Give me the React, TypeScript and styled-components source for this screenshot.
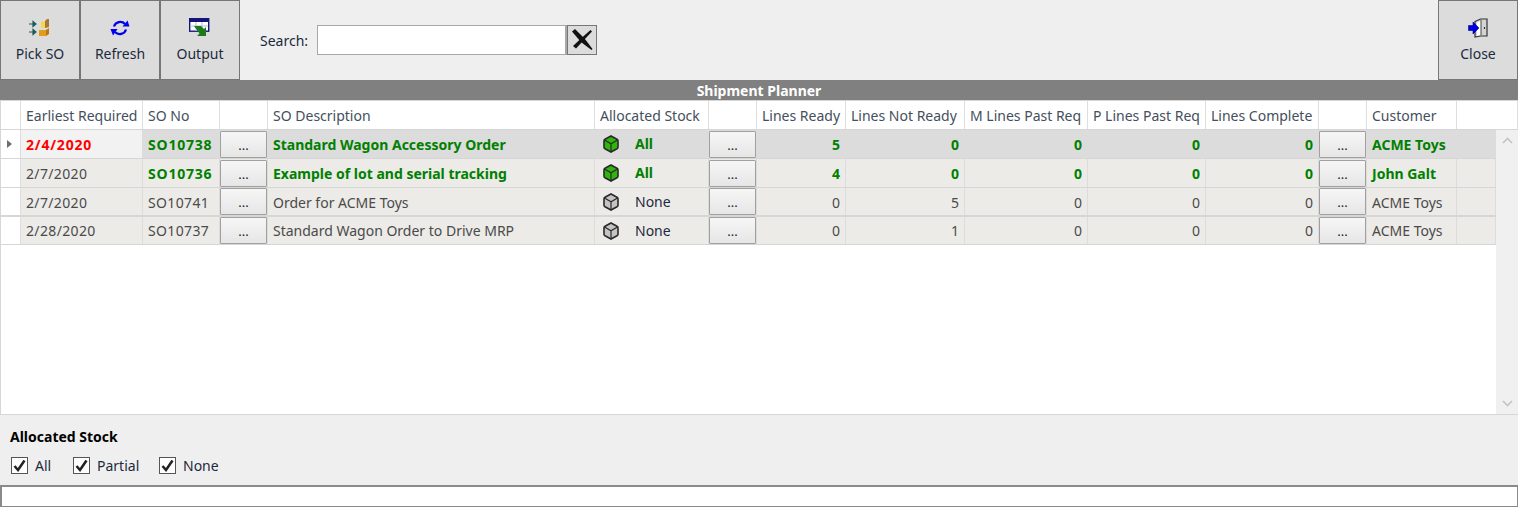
import React, { FunctionComponent } from 'react'
import styled, { createGlobalStyle } from 'styled-components'

const GlobalStyle = createGlobalStyle`
  html, body {
    margin: 0;
    padding: 0;
    background: #efefef;
  }
  body {
    font-family: "Noto Sans", "Open Sans", sans-serif;
    font-size: 14px;
    color: #444;
    overflow: hidden;
  }
`

const Page = styled.div`
  width: 1518px;
  height: 507px;
  display: flex;
  flex-direction: column;
  background: #efefef;
`
const Toolbar = styled.div`
  height: 80px;
  display: flex;
  align-items: stretch;
  flex: none;
`
const ToolButton = styled.button`
  width: 80px;
  height: 80px;
  box-sizing: border-box;
  padding: 17px 0 0;
  border: 1px solid #777;
  outline: none;
  background: #dcdcdc;
  color: #1c2a3c;
  font: inherit;
  font-size: 14px;
  display: flex;
  flex-direction: column;
  align-items: center;
  gap: 6px;
  line-height: 19px;

  svg {
    display: block;
  }
`
const SearchArea = styled.div`
  flex: 1;
  display: flex;
  align-items: center;
  padding: 0 0 0 20px;
  color: #1c2a3c;
`
const SearchLabel = styled.span`
  width: 57px;
`
const SearchInput = styled.input`
  width: 250px;
  height: 30px;
  box-sizing: border-box;
  border: 1px solid #a8a8a8;
  border-right-width: 2px;
  background: #fff;
  outline: none;
`
const ClearButton = styled.button`
  width: 30px;
  height: 30px;
  box-sizing: border-box;
  padding: 0;
  border: 1px solid #777;
  background: #dcdcdc;
  display: flex;
  align-items: center;
  justify-content: center;
`
const TitleBar = styled.div`
  height: 20px;
  flex: none;
  background: #808080;
  color: #fff;
  font-weight: 700;
  font-size: 14px;
  line-height: 21px;
  text-align: center;
`
const Grid = styled.div`
  height: 315px;
  flex: none;
  position: relative;
  box-sizing: border-box;
  border: 1px solid #d6d6d6;
  border-right: none;
  background: #fff;
  overflow: hidden;
`
const columns =
  '20px 122px 77px 48px 327px 114px 48px 89px 119px 123px 118px 113px 48px 90px'

const HeaderRow = styled.div`
  display: grid;
  grid-template-columns: ${columns} 1fr;
  height: 28px;
  border-bottom: 1px solid #d6d6d6;
`
const HeaderCell = styled.div`
  box-sizing: border-box;
  padding: 0 5px;
  line-height: 30px;
  border-right: 1px solid #dedede;
  color: #444f5c;
  white-space: nowrap;
  overflow: hidden;
`
const Row = styled.div<{ $height: number; $rule: number; $leading: number }>`
  display: grid;
  grid-template-columns: ${columns} 39px;
  width: 1496px;
  height: ${(p) => p.$height}px;
  line-height: ${(p) => p.$leading}px;
  border-bottom: ${(p) => p.$rule}px solid #d6d6d6;
`
const Cell = styled.div<{ $selected?: boolean; $current?: boolean; $right?: boolean; $tone?: string; $digits?: boolean }>`
  box-sizing: border-box;
  padding: 0 5px;
  border-right: 1px solid #dcdcdc;
  white-space: nowrap;
  overflow: hidden;
  text-align: ${(p) => (p.$right ? 'right' : 'left')};
  background: ${(p) => (p.$current ? '#f2f2f2' : p.$selected ? '#dcdcdc' : '#ecebe8')};
  color: ${(p) => p.$tone || '#4a4a4a'};
  font-weight: ${(p) => (p.$tone && p.$tone !== '#1c2a3c' ? 700 : 400)};
  letter-spacing: ${(p) => (!p.$digits ? 'normal' : p.$tone ? '0.8px' : '0.35px')};
`
const SelectorCell = styled.div`
  box-sizing: border-box;
  border-right: 1px solid #dcdcdc;
  display: flex;
  align-items: center;
  justify-content: center;
  background: #fff;
`
const Marker = styled.span`
  width: 0;
  height: 0;
  margin-left: -2px;
  border-left: 5px solid #6e6e6e;
  border-top: 4px solid transparent;
  border-bottom: 4px solid transparent;
`
const ButtonCell = styled.div<{ $selected?: boolean }>`
  box-sizing: border-box;
  padding: 0;
  background: ${(p) => (p.$selected ? '#dcdcdc' : '#ecebe8')};
  border-right: 1px solid #dcdcdc;
  display: flex;
  align-items: center;
`
const EllipsisButton = styled.button`
  width: 47px;
  height: 27px;
  box-sizing: border-box;
  padding: 2px 0 0;
  border: 1px solid #a0a0a0;
  border-radius: 1px;
  background: linear-gradient(#f6f6f6, #e6e6e6);
  color: #222;
  font: inherit;
  font-size: 13px;
  line-height: 23px;
`
const StockCell = styled(Cell)`
  display: flex;
  align-items: center;
  padding-left: 8px;
  gap: 16px;
`
const Scrollbar = styled.div`
  position: absolute;
  top: 29px;
  right: 0;
  bottom: 0;
  width: 22px;
  background: #f0f0f0;
  display: flex;
  flex-direction: column;
  justify-content: space-between;
  align-items: center;
  padding: 7px 0;
  box-sizing: border-box;
`
const FilterPanel = styled.div`
  height: 70px;
  flex: none;
  box-sizing: border-box;
  padding: 12px 10px 0;
`
const FilterTitle = styled.div`
  font-weight: 700;
  font-size: 14px;
  line-height: 19px;
  color: #000;
`
const FilterRow = styled.div`
  display: flex;
  margin-top: 10px;
  margin-left: 1px;
`
const FilterOption = styled.label<{ $width: number }>`
  width: ${(p) => p.$width}px;
  display: flex;
  align-items: center;
  gap: 7px;
  color: #1c2a3c;
  line-height: 19px;
`
const CheckBox = styled.span`
  width: 17px;
  height: 17px;
  box-sizing: border-box;
  border: 1px solid #555;
  background: #fff;
  display: flex;
  align-items: center;
  justify-content: center;
`
const StatusBar = styled.div`
  height: 22px;
  flex: none;
  box-sizing: border-box;
  border: 2px solid #8a8a8a;
  border-bottom-width: 1px;
  border-right-width: 1px;
  background: #fff;
`

const PickIcon = () => (
  <svg width="24" height="20" viewBox="0 0 24 20">
    <path d="M1 6h6M5 3.500L8 6l-3 2.500zM1 14h6M5 11.500L8 14l-3 2.500z" fill="#1f5c5c" stroke="#1f5c5c" strokeWidth="1.200" />
    <path d="M13 4l4-1v7h-4z" fill="#f3d84a" />
    <path d="M17 3l2-2h2v8l-4 1z" fill="#a8763a" />
    <path d="M11 12h7v6h-7z" fill="#e39c17" />
    <path d="M18 12l3-2v6l-3 2z" fill="#b87a10" />
  </svg>
)
const RefreshIcon = () => (
  <svg width="20" height="20" viewBox="0 0 20 20">
    <path d="M4 8.500A6.500 6.500 0 0 1 15 6" fill="none" stroke="#0000f0" strokeWidth="2.200" />
    <path d="M12.500 8.500L19.500 8.500L17.500 2.500z" fill="#0000f0" />
    <path d="M16 11.500A6.500 6.500 0 0 1 5 14" fill="none" stroke="#0000f0" strokeWidth="2.200" />
    <path d="M0.500 11L7.500 11L3 17.500z" fill="#0000f0" />
  </svg>
)
const OutputIcon = () => (
  <svg width="22" height="20" viewBox="0 0 22 20">
    <rect x="0.700" y="0.700" width="19" height="12.500" fill="#fff" stroke="#14147a" strokeWidth="1.400" />
    <path d="M1 1h18v3H1z" fill="#14147a" />
    <path d="M7 4v9M13 4v9M1 8h18" stroke="#b9b9d6" strokeWidth="1" />
    <path d="M5 8h7l3 3 2-2v9H8l2.500-2.500z" fill="#1c7a1c" />
  </svg>
)
const CloseIcon = () => (
  <svg width="20" height="20" viewBox="0 0 20 20">
    <path d="M7 3.500L12.500 1H19v17h-6.500L7 19z" fill="#d4d4d4" stroke="#333" strokeWidth="1.200" />
    <path d="M9 4.500l4-2v14l-4 1.500z" fill="#fff" />
    <path d="M13 2v15" stroke="#444" strokeWidth="1" />
    <path d="M16.500 9v2" stroke="#333" strokeWidth="1.200" />
    <path d="M0.500 7.500h4.500V4L11 10l-6 6v-3.500H0.500z" fill="#0000e6" stroke="#00006e" strokeWidth="0.600" />
  </svg>
)
const CrossIcon = () => (
  <svg width="26" height="26" viewBox="0 0 26 26">
    <path d="M3 4.500L6 2l9 9 2.500 3 6 8-1 1-8-6-3-2.500z" fill="#111" />
    <path d="M21.500 3l1.500 1.500-8 8.500-8 8.500-3-2.500 8.500-8z" fill="#111" />
  </svg>
)
const Cube = ({ filled }: { filled: boolean }) => (
  <svg width="16" height="18" viewBox="0 0 16 18">
    <path
      d="M8 1l6 3.200q1 .6 1 1.600v6.400q0 1-1 1.600L8 17l-6-3.200q-1-.6-1-1.600V5.800q0-1 1-1.600z"
      fill={filled ? '#2fb50e' : '#c4c4c4'}
      stroke="#2a2a2a"
      strokeWidth="1.600"
    />
    <path d="M1.500 5L8 8.700 14.500 5M8 8.700V17" fill="none" stroke="#2a2a2a" strokeWidth="1.200" />
  </svg>
)
const Check = () => (
  <svg width="13" height="13" viewBox="0 0 13 13">
    <path d="M1.500 7l3.500 4 6.500-9.500" fill="none" stroke="#222" strokeWidth="2.500" />
  </svg>
)

const headers = [
  'Earliest Required',
  'SO No',
  '',
  'SO Description',
  'Allocated Stock',
  '',
  'Lines Ready',
  'Lines Not Ready',
  'M Lines Past Req',
  'P Lines Past Req',
  'Lines Complete',
  '',
  'Customer',
  '',
]

interface Order {
  date: string
  no: string
  description: string
  stock: string
  ready: number
  notReady: number
  customer: string
  height: number
  rule: number
  leading: number
  late?: boolean
  allocated?: boolean
}

const orders: Order[] = [
  { date: '2/4/2020', no: 'SO10738', description: 'Standard Wagon Accessory Order', stock: 'All', ready: 5, notReady: 0, customer: 'ACME Toys', height: 28, rule: 1, leading: 30, late: true, allocated: true },
  { date: '2/7/2020', no: 'SO10736', description: 'Example of lot and serial tracking', stock: 'All', ready: 4, notReady: 0, customer: 'John Galt', height: 28, rule: 1, leading: 30, allocated: true },
  { date: '2/7/2020', no: 'SO10741', description: 'Order for ACME Toys', stock: 'None', ready: 0, notReady: 5, customer: 'ACME Toys', height: 27, rule: 2, leading: 30 },
  { date: '2/28/2020', no: 'SO10737', description: 'Standard Wagon Order to Drive MRP', stock: 'None', ready: 0, notReady: 1, customer: 'ACME Toys', height: 27, rule: 1, leading: 28 },
]

const GREEN = '#008000'

export const App: FunctionComponent = () => {
  return (
    <Page>
      <GlobalStyle />
      <Toolbar>
        <ToolButton><PickIcon />Pick SO</ToolButton>
        <ToolButton><RefreshIcon />Refresh</ToolButton>
        <ToolButton><OutputIcon />Output</ToolButton>
        <SearchArea>
          <SearchLabel>Search:</SearchLabel>
          <SearchInput />
          <ClearButton><CrossIcon /></ClearButton>
        </SearchArea>
        <ToolButton><CloseIcon />Close</ToolButton>
      </Toolbar>
      <TitleBar>Shipment Planner</TitleBar>
      <Grid>
        <HeaderRow>
          <HeaderCell />
          {headers.map((h, i) => (
            <HeaderCell key={i}>{h}</HeaderCell>
          ))}
        </HeaderRow>
        {orders.map((o, i) => {
          const selected = i === 0
          const tone = o.allocated ? GREEN : undefined
          return (
            <Row key={o.no} $height={o.height} $rule={o.rule} $leading={o.leading}>
              <SelectorCell>{selected && <Marker />}</SelectorCell>
              <Cell $current={selected} $digits $tone={o.late ? '#ff0000' : undefined}>{o.date}</Cell>
              <Cell $selected={selected} $digits $tone={tone}>{o.no}</Cell>
              <ButtonCell $selected={selected}><EllipsisButton>...</EllipsisButton></ButtonCell>
              <Cell $selected={selected} $tone={tone}>{o.description}</Cell>
              <StockCell $selected={selected} $tone={tone || '#1c2a3c'}>
                <Cube filled={!!o.allocated} />
                {o.stock}
              </StockCell>
              <ButtonCell $selected={selected}><EllipsisButton>...</EllipsisButton></ButtonCell>
              <Cell $selected={selected} $tone={tone} $right>{o.ready}</Cell>
              <Cell $selected={selected} $tone={tone} $right>{o.notReady}</Cell>
              <Cell $selected={selected} $tone={tone} $right>0</Cell>
              <Cell $selected={selected} $tone={tone} $right>0</Cell>
              <Cell $selected={selected} $tone={tone} $right>0</Cell>
              <ButtonCell $selected={selected}><EllipsisButton>...</EllipsisButton></ButtonCell>
              <Cell $selected={selected} $tone={tone}>{o.customer}</Cell>
              <Cell $selected={selected} />
            </Row>
          )
        })}
        <Scrollbar>
          <svg width="11" height="7" viewBox="0 0 11 7"><path d="M1 6l4.500-4.500L10 6" fill="none" stroke="#c4c4c4" strokeWidth="1.600" /></svg>
          <svg width="11" height="7" viewBox="0 0 11 7"><path d="M1 1l4.500 4.500L10 1" fill="none" stroke="#c4c4c4" strokeWidth="1.600" /></svg>
        </Scrollbar>
      </Grid>
      <FilterPanel>
        <FilterTitle>Allocated Stock</FilterTitle>
        <FilterRow>
          <FilterOption $width={62}><CheckBox><Check /></CheckBox>All</FilterOption>
          <FilterOption $width={86}><CheckBox><Check /></CheckBox>Partial</FilterOption>
          <FilterOption $width={70}><CheckBox><Check /></CheckBox>None</FilterOption>
        </FilterRow>
      </FilterPanel>
      <StatusBar />
    </Page>
  )
}

export default App
